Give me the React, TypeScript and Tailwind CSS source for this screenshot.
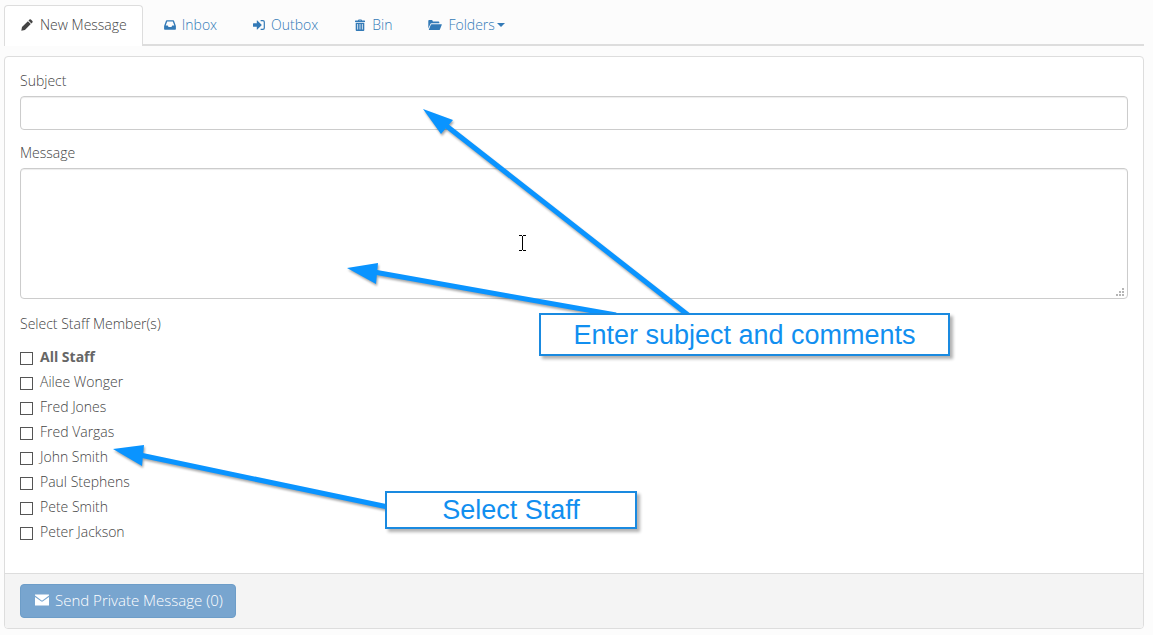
import React from "react";

const staff = [
  "Ailee Wonger",
  "Fred Jones",
  "Fred Vargas",
  "John Smith",
  "Paul Stephens",
  "Pete Smith",
  "Peter Jackson",
];

function PencilIcon() {
  return (
    <svg viewBox="0 0 12 12" className="h-3 w-3" fill="currentColor" fillRule="evenodd" aria-hidden="true">
      <path d="M.3 11.700 1 8.100 6.900 2.200 9.800 5.100 3.900 11zM7.500 1.600 8.500.600q.7-.6 1.400 0l1.500 1.500q.6.700 0 1.400l-1 1z" />
    </svg>
  );
}

function InboxIcon() {
  return (
    <svg viewBox="0 0 12 12" className="h-3 w-3" fill="currentColor" fillRule="evenodd" aria-hidden="true">
      <path d="M2.8 1.2h6.4q.7 0 .9.7L11.900 7v3.100q0 .7-.7.700H.8q-.7 0-.7-.700V7l1.800-5.100q.2-.7.9-.7zM3.200 2.600 1.700 6.600h2l.9 1.500h2.800l.9-1.500h2L8.800 2.600z" />
    </svg>
  );
}

function OutboxIcon() {
  return (
    <svg viewBox="0 0 12 12" className="h-3 w-3" aria-hidden="true">
      <path fill="currentColor" d="M.5 4.200h3.300V1.700q0-.6.5-.2L8.600 5.700q.3.300 0 .6L4.300 10.500q-.5.400-.5-.2V7.800H.5Q0 7.800 0 7.300V4.700q0-.5.5-.5z" />
      <path fill="none" stroke="currentColor" strokeWidth="1.200" d="M7.600 1.600h2.300q1.400 0 1.400 1.400v6q0 1.400-1.400 1.400H7.600" />
    </svg>
  );
}

function BinIcon() {
  return (
    <svg viewBox="0 0 12 12" className="h-3 w-3" fill="currentColor" fillRule="evenodd" aria-hidden="true">
      <path d="M4 1.500Q4 .4 5 .4h2q1 0 1 1.100h2.500q.5 0 .5.500v1H1V2q0-.5.5-.5zM5 1.500h2V1.200H5z" />
      <path d="M1.700 3.700h8.600V11q0 .9-.9.900H2.600q-.9 0-.9-.9zM3.300 4.900v5.600h.8V4.900zM5.600 4.900v5.600h.8V4.900zM7.900 4.900v5.600h.8V4.900z" />
    </svg>
  );
}

function FolderIcon() {
  return (
    <svg viewBox="0 0 14 12" className="h-3 w-3.5" fill="currentColor" aria-hidden="true">
      <path d="M.3 9.500V1.900q0-.8.8-.8h2.700q.5 0 .7.500l.4.800h5.600q.8 0 .8.800v1H3.500q-.7 0-1 .6z" />
      <path d="M3.600 5.300h9.900q.5 0 .3.500l-1.900 4.700q-.3.600-.9.600H1.200q-.5 0-.3-.5l1.900-4.800q.2-.5.8-.5z" />
    </svg>
  );
}

function EnvelopeIcon() {
  return (
    <svg viewBox="0 0 14 12" className="h-3 w-3.5" fill="currentColor" aria-hidden="true">
      <path d="M0 .5h14v1.100L7.700 6.300q-.7.500-1.400 0L0 1.600z" />
      <path d="M0 2.900 6 7.300q1 .7 2 0l6-4.400v8.600H0z" />
    </svg>
  );
}

function Tabs() {
  const link = "flex h-[39px] items-center gap-1.5 px-[18px] text-[#337ab7]";
  return (
    <nav className="flex h-[41px] items-start border-b-2 border-[#ddd]">
      <a
        href="#new"
        aria-current="page"
        className="flex h-[41px] items-center gap-[7px] rounded-t border border-b-0 border-[#ddd] bg-white pr-[15px] pb-0.5 pl-4 text-[#444]"
      >
        <PencilIcon />
        New Message
      </a>
      <a href="#inbox" className={link + " ml-[3px]"}>
        <InboxIcon />
        Inbox
      </a>
      <a href="#outbox" className={link}>
        <OutboxIcon />
        Outbox
      </a>
      <a href="#bin" className={link}>
        <BinIcon />
        Bin
      </a>
      <a href="#folders" className={link}>
        <FolderIcon />
        <span className="flex items-center gap-0.5">
          Folders
          <svg viewBox="0 0 8 4" className="h-1 w-2" fill="currentColor" aria-hidden="true">
            <path d="M0 0h8L4 4z" />
          </svg>
        </span>
      </a>
    </nav>
  );
}

function StaffOption({ name, bold }: { name: string; bold?: boolean }) {
  return (
    <label className="flex h-[25px] items-center gap-[7px]">
      <input
        type="checkbox"
        className="mt-[3px] h-[13px] w-[13px] shrink-0 appearance-none border border-[#555] bg-white checked:bg-[#337ab7]"
      />
      <span className={bold ? "font-bold text-[#666]" : ""}>{name}</span>
    </label>
  );
}

function Annotations() {
  const callout =
    "absolute flex items-center justify-center border-2 border-[#1a8ae0] bg-white shadow-[3px_3px_3px_rgba(0,0,0,0.3)]";
  return (
    <div className="pointer-events-none absolute inset-0 font-['Liberation_Sans',Arial,sans-serif] text-[27px] leading-7 font-normal text-[#118ff0]">
      <svg
        viewBox="0 0 1153 635"
        className="absolute top-0 left-0 h-[635px] w-[1153px] max-w-none drop-shadow-[1px_2px_1px_rgba(0,0,0,0.35)]"
        fill="#0a94ff"
        stroke="#0a94ff"
        aria-hidden="true"
      >
        <path strokeWidth="5" d="M444 124 688 315M374 272 616 315M140 455 388 507" />
        <path stroke="none" d="M423 109 453 120 441 134zM347 268 378 263 376 284zM113 449 144 445 142 466z" />
      </svg>
      <svg viewBox="0 0 7 16" className="absolute top-[235px] left-[519px] h-4 w-[7px]" aria-hidden="true">
        <path fill="none" stroke="#000" d="M0 .5h3M4 .5h3M3.500 1v14M0 15.500h3M4 15.500h3" />
      </svg>
      <div className={callout + " top-[313px] left-[539px] h-[43px] w-[411px]"}>Enter subject and comments</div>
      <div className={callout + " top-[491px] left-[385px] h-[38px] w-[252px]"}>Select Staff</div>
    </div>
  );
}

export default function App() {
  const field =
    "block w-full rounded border border-[#ccc] bg-white px-3 text-[#555] shadow-[inset_0_1px_1px_rgba(0,0,0,0.075)] outline-none";
  return (
    <div className="relative min-h-screen overflow-hidden bg-[#fcfcfc] pt-[5px] pr-[9px] pb-1.5 pl-1 font-['Open_Sans','Noto_Sans',sans-serif] text-[14px] leading-5 font-light text-[#444]">
      <Tabs />
      <form
        className="mt-2.5 overflow-hidden rounded border border-[#ddd] bg-white"
        onSubmit={(e) => e.preventDefault()}
      >
        <div className="px-[15px] pt-3.5 pb-[29px]">
          <label htmlFor="subject" className="mb-[5px] block">
            Subject
          </label>
          <input id="subject" type="text" className={field + " h-[34px]"} />
          <label htmlFor="message" className="mt-[13px] mb-[5px] block">
            Message
          </label>
          <div className="relative">
            <textarea id="message" className={field + " h-[131px] resize-none py-1.5"} />
            <svg viewBox="0 0 8 8" className="absolute right-1 bottom-[3px] h-2 w-2" fill="#b5b5b5" aria-hidden="true">
              <path d="M6 0h2v2H6zM3 3h2v2H3zM6 3h2v2H6zM0 6h2v2H0zM3 6h2v2H3zM6 6h2v2H6z" />
            </svg>
          </div>
          <fieldset className="mt-[15px]">
            <legend className="mb-2.5">Select Staff Member(s)</legend>
            <StaffOption name="All Staff" bold />
            {staff.map((name) => (
              <StaffOption key={name} name={name} />
            ))}
          </fieldset>
        </div>
        <footer className="border-t border-[#ddd] bg-[#f4f4f4] px-[15px] py-2.5">
          <button
            type="submit"
            className="flex h-[34px] items-center gap-1.5 rounded border border-[#6d9dc8] bg-[#78a5cf] pr-3 pb-0.5 pl-3.5 text-[15px] text-white"
          >
            <EnvelopeIcon />
            Send Private Message (0)
          </button>
        </footer>
      </form>
      <Annotations />
    </div>
  );
}
